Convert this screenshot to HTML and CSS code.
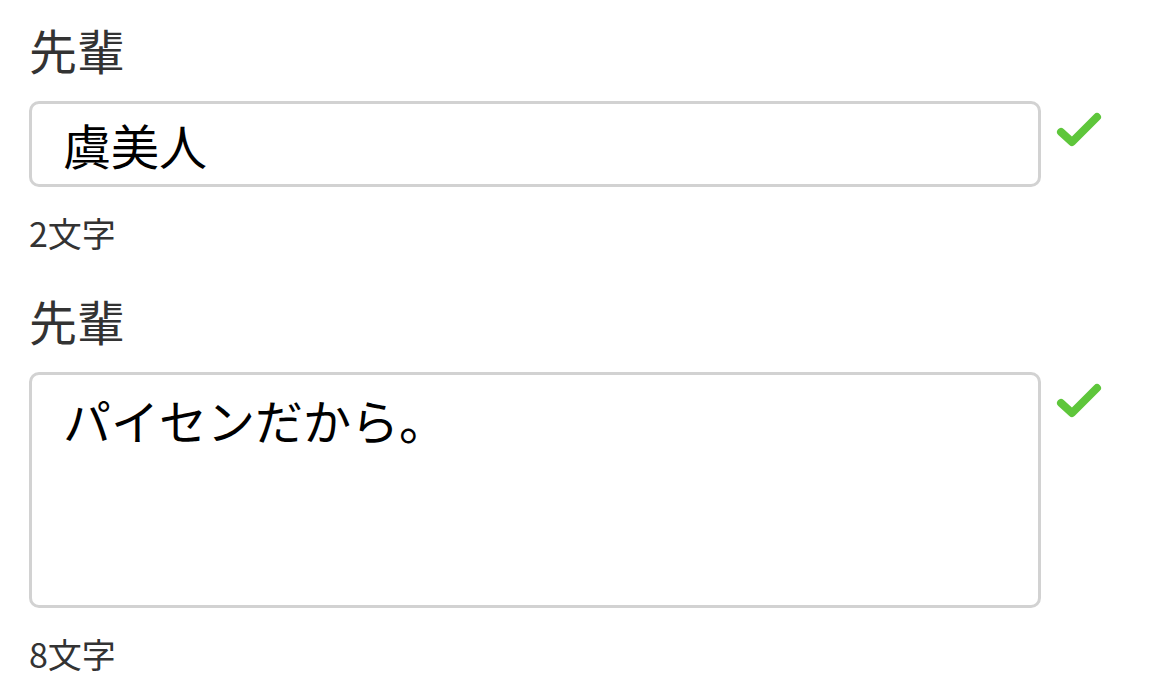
FILE: index.html
```html
<!DOCTYPE html>
<html lang="ja">

<head>
    <meta charset="UTF-8">
    <meta name="viewport" content="width=device-width, initial-scale=1.0">
    <title>先輩</title>
    <link rel="stylesheet" href="styles.css">
</head>

<body>
    <div class="form">
        <div class="field">
            <label class="label" for="name">先輩</label>
            <div class="row">
                <input class="box" type="text" id="name" value="虞美人">
                <svg class="check" viewBox="0 0 46 36" width="46" height="36">
                    <polyline points="5,21 16,31 41,6" fill="none" stroke="#5ec63b" stroke-width="8" stroke-linecap="round" stroke-linejoin="round"/>
                </svg>
            </div>
            <div class="count">2文字</div>
        </div>

        <div class="field">
            <label class="label" for="reason">先輩</label>
            <div class="row">
                <textarea class="box area" id="reason">パイセンだから。</textarea>
                <svg class="check" viewBox="0 0 46 36" width="46" height="36">
                    <polyline points="5,21 16,31 41,6" fill="none" stroke="#5ec63b" stroke-width="8" stroke-linecap="round" stroke-linejoin="round"/>
                </svg>
            </div>
            <div class="count">8文字</div>
        </div>
    </div>
</body>

</html>
```

FILE: styles.css
```css
body {
    margin: 0;
    background: #fff;
    font-family: "Noto Sans CJK JP", "Noto Sans", sans-serif;
    color: #333;
}

.form {
    padding: 21px 0 0 29px;
}

.field {
    margin-bottom: 39px;
}

.label {
    display: block;
    font-size: 48px;
    line-height: 56px;
    color: #333;
}

.row {
    display: flex;
    align-items: flex-start;
    gap: 15px;
    margin-top: 24px;
}

.box {
    box-sizing: border-box;
    width: 1012px;
    height: 86px;
    margin: 0;
    padding: 0 31px;
    border: 3px solid #d2d2d2;
    border-radius: 10px;
    background: #fff;
    font-family: "Noto Sans CJK JP", "Noto Sans", sans-serif;
    font-size: 48px;
    color: #000;
    outline: none;
}

.area {
    height: 236px;
    padding: 13px 31px;
    line-height: 62px;
    resize: none;
}

.check {
    margin-top: 10px;
}

.count {
    margin-top: 26px;
    font-size: 34px;
    line-height: 40px;
    color: #333;
}
```
